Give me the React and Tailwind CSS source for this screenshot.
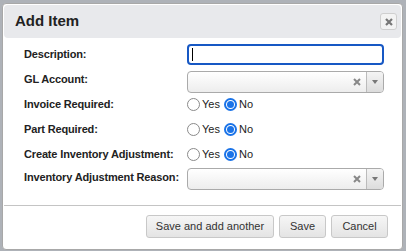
import React from "react";

const font = { fontFamily: '"Liberation Sans", Arial, Helvetica, sans-serif' };

function Radio({ checked }) {
  if (checked) {
    return (
      <span className="inline-flex items-center justify-center w-[13px] h-[13px] rounded-full bg-white border-2 border-[#1a73e8]">
        <span className="w-[7px] h-[7px] rounded-full bg-[#1a73e8]" />
      </span>
    );
  }
  return <span className="inline-block w-[13px] h-[13px] rounded-full border border-[#8a8a8a] bg-white" />;
}

function RadioPair() {
  return (
    <div className="flex items-center text-[11px] text-[#222]">
      <Radio />
      <span className="ml-[2px] mr-[4px]">Yes</span>
      <Radio checked />
      <span className="ml-[2px]">No</span>
    </div>
  );
}

function Select() {
  return (
    <div className="flex w-[197px] h-[22px] rounded-[4px] border border-[#aaa] bg-gradient-to-b from-white to-[#ededed] overflow-hidden">
      <div className="flex-1 flex items-center justify-end pr-[5px]">
        <svg width="8" height="8" viewBox="0 0 8 8">
          <path d="M1 1 L7 7 M7 1 L1 7" stroke="#888" strokeWidth="2" />
        </svg>
      </div>
      <div className="w-[17px] border-l border-[#bbb] flex items-center justify-center bg-gradient-to-b from-[#f4f4f4] to-[#dcdcdc]">
        <svg width="6" height="4" viewBox="0 0 6 4">
          <path d="M0 0 L6 0 L3 4 Z" fill="#777" />
        </svg>
      </div>
    </div>
  );
}

function Row({ label, children, className, labelClass = "" }) {
  return (
    <div className={"flex items-center " + className}>
      <div className={"w-[183px] shrink-0 whitespace-nowrap pl-[20px] text-[11px] font-bold text-[#222] tracking-[-0.15px] " + labelClass}>{label}</div>
      {children}
    </div>
  );
}

function Btn({ children, className }) {
  return (
    <button className={"h-[23px] rounded-[3px] border border-[#c8c8c8] bg-gradient-to-b from-[#f6f6f6] to-[#e4e4e4] text-[11px] text-[#333] " + className}>
      {children}
    </button>
  );
}

export default function App() {
  return (
    <div className="w-[406px] h-[251px] bg-[#aeb2b8] pt-[3px] pl-[2px]" style={font}>
      <div className="w-[401px] h-[247px] bg-white border border-[#a8a8a8] rounded-[4px] p-[1px] flex flex-col">
        <div className="h-[33px] bg-[#e8e9ec] rounded-[4px] flex items-center justify-between pl-[11px] pr-[4px]">
          <span className="text-[15px] font-bold text-[#222]">Add Item</span>
          <span className="w-[17px] h-[17px] border border-[#cfcfcf] rounded-[3px] bg-[#f3f3f3] flex items-center justify-center">
            <svg width="8" height="8" viewBox="0 0 8 8">
              <path d="M1 1 L7 7 M7 1 L1 7" stroke="#777" strokeWidth="2.2" />
            </svg>
          </span>
        </div>
        <div className="flex flex-col pt-[6px]">
          <Row label="Description:" className="h-[21px]">
            <div className="w-[197px] h-[21px] rounded-[4px] border-2 border-[#1758c4] flex items-center pl-[3px]">
              <span className="w-px h-[13px] bg-black" />
            </div>
          </Row>
          <Row label="GL Account:" className="h-[22px] mt-[6px]" labelClass="-mt-[5px]">
            <Select />
          </Row>
          <Row label="Invoice Required:" className="h-[20px] mt-[1px]">
            <RadioPair />
          </Row>
          <Row label="Part Required:" className="h-[20px] mt-[5px]">
            <RadioPair />
          </Row>
          <Row label="Create Inventory Adjustment:" className="h-[20px] mt-[5px]">
            <RadioPair />
          </Row>
          <Row label="Inventory Adjustment Reason:" className="h-[22px] mt-[4px]" labelClass="-mt-[3px]">
            <Select />
          </Row>
        </div>
        <div className="mt-[15px] border-t border-[#c4c4c4]" />
        <div className="flex justify-end gap-[5px] pt-[9px] pr-[13px]">
          <Btn className="w-[128px]">Save and add another</Btn>
          <Btn className="w-[47px]">Save</Btn>
          <Btn className="w-[57px]">Cancel</Btn>
        </div>
      </div>
    </div>
  );
}
